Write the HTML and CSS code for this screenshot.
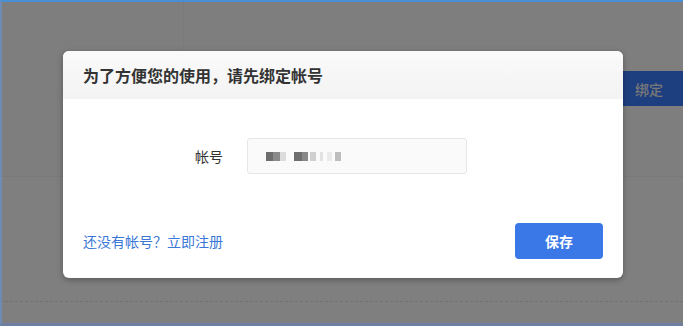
FILE: index.html
```html
<!DOCTYPE html>
<html lang="zh-CN">

<head>
  <meta charset="UTF-8">
  <meta name="viewport" content="width=device-width, initial-scale=1.0">
  <title>绑定帐号</title>

  <!-- styles -->
  <link rel="stylesheet" href="styles.css">
</head>

<body>
  <div class="page">
    <div class="page-top">
      <div class="page-side"></div>
      <div class="page-main">
        <button class="bind-btn">绑定</button>
      </div>
    </div>
    <div class="page-list">
      <div class="list-row"></div>
    </div>
  </div>

  <div class="mask">
    <div class="modal">
      <header class="modal-header">
        <h2>为了方便您的使用，请先绑定帐号</h2>
      </header>

      <div class="modal-body">
        <div class="form-row">
          <label>帐号</label>
          <div class="input-box"><span class="masked"></span></div>
        </div>
      </div>

      <footer class="modal-footer">
        <a href="#" class="register">还没有帐号？立即注册</a>
        <button class="save-btn">保存</button>
      </footer>
    </div>
  </div>

  <div class="frame"></div>
</body>

</html>
```

FILE: styles.css
```css
* {
  margin: 0;
  padding: 0;
  box-sizing: border-box;
  font-family: "Noto Sans CJK SC", "Noto Sans", sans-serif;
}

body {
  width: 683px;
  height: 326px;
  overflow: hidden;
  position: relative;
  background-color: #fff;
}

/* page behind the mask */
.page {
  height: 100%;
  display: flex;
  flex-direction: column;
}

.page-top {
  height: 177px;
  display: flex;
  background-color: #fdfdfd;
  border-bottom: 1px solid #f2f2f2;
}

.page-side {
  width: 184px;
  border-right: 1px solid #f4f4f4;
}

.page-main {
  flex: 1;
  display: flex;
  justify-content: flex-end;
  align-items: flex-start;
  padding-top: 71px;
}

.bind-btn {
  width: 120px;
  height: 35px;
  border: none;
  background-color: #3c7efe;
  color: #f0f0f0;
  font-size: 14px;
  font-weight: 500;
  text-align: right;
  padding-right: 20px;
}

.page-list {
  flex: 1;
  padding-top: 124px;
}

.list-row {
  border-top: 1px dashed #e4e4e4;
}

/* mask + modal */
.mask {
  position: absolute;
  inset: 0;
  background-color: rgba(0, 0, 0, 0.5);
  padding: 51px 0 0 63px;
}

.modal {
  width: 560px;
  height: 227px;
  border-radius: 6px;
  background-color: #fff;
  overflow: hidden;
  box-shadow: 0 2px 6px rgba(0, 0, 0, 0.3);
  display: flex;
  flex-direction: column;
}

.modal-header {
  height: 48px;
  display: flex;
  align-items: center;
  padding-left: 20px;
  background: linear-gradient(#fafafa, #f3f3f3);
}

.modal-header h2 {
  font-size: 16px;
  font-weight: 700;
  color: #333;
}

.modal-body {
  padding-top: 39px;
}

.form-row {
  display: flex;
  align-items: center;
  gap: 24px;
}

.form-row label {
  width: 160px;
  text-align: right;
  font-size: 14px;
  color: #333;
}

.input-box {
  width: 220px;
  height: 36px;
  border: 1px solid #e6e6e6;
  border-radius: 3px;
  background-color: #fafafa;
  display: flex;
  align-items: center;
  padding-left: 18px;
}

.masked {
  width: 75px;
  height: 9px;
  background: linear-gradient(to right,
      #6e6e6e 0 7px, #8a8a8a 7px 14px, #dcdcdc 14px 20px, transparent 20px 28px,
      #6e6e6e 28px 36px, #888 36px 42px, transparent 42px 44px, #cfcfcf 44px 50px,
      transparent 50px 54px, #e2e2e2 54px 57px, transparent 57px 61px,
      #eaeaea 61px 66px, transparent 66px 69px, #bdbdbd 69px 75px);
}

.modal-footer {
  margin-top: 49px;
  padding: 0 20px;
  display: flex;
  align-items: center;
  justify-content: space-between;
}

.register {
  font-size: 14px;
  color: #3a77d6;
  text-decoration: none;
}

.save-btn {
  width: 88px;
  height: 36px;
  border: none;
  border-radius: 4px;
  background-color: #3b78e7;
  color: #fff;
  font-size: 14px;
  font-weight: 700;
  cursor: pointer;
}

/* window focus frame */
.frame {
  position: absolute;
  inset: 0;
  border-top: 2px solid #4a8ed6;
  border-left: 2px solid #6e8cb3;
  border-bottom: 3px solid #6e7ea0;
  pointer-events: none;
}
```
